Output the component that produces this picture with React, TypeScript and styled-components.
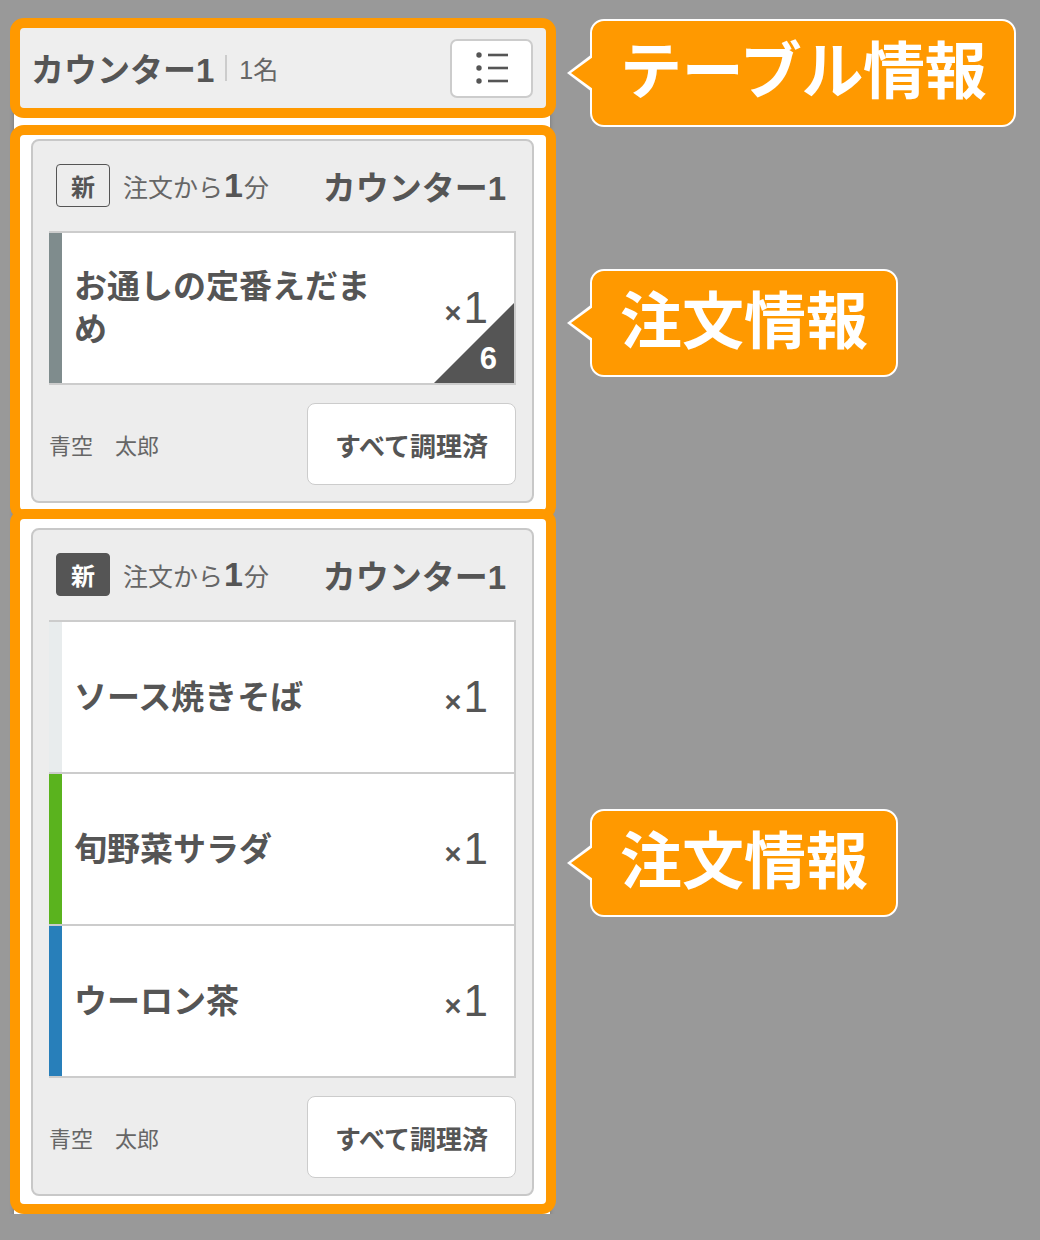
import styled, { createGlobalStyle } from 'styled-components'

const GlobalStyle = createGlobalStyle`
  body {
    margin: 0;
    background: #999;
    font-family: "Liberation Sans", "Noto Sans CJK JP", sans-serif;
    color: #555;
  }
`

const ORANGE = '#ff9900'

const Page = styled.div`
  display: grid;
  grid-template-columns: 546px 1fr;
  column-gap: 34px;
  align-items: center;
  padding: 18px 0 0 10px;
`

// white column sitting behind the highlighted sections
const Panel = styled.div`
  grid-column: 1;
  grid-row: 1 / span 3;
  align-self: stretch;
  margin: 40px 6px -6px 4px;
  background: #fff;
  box-shadow: 0 1px 4px rgba(0, 0, 0, 0.25);
`

const HeaderFrame = styled.header`
  grid-column: 1;
  grid-row: 1;
  box-sizing: border-box;
  height: 100px;
  display: flex;
  align-items: center;
  padding: 0 13px 0 11px;
  border: 10px solid ${ORANGE};
  border-radius: 14px;
  background: #eee;
`

const Title = styled.span`
  font-size: 33px;
  font-weight: 700;
  color: #555;
`

const Divider = styled.span`
  width: 2px;
  height: 26px;
  margin: 0 12px 0 11px;
  background: #ccc;
`

const Guests = styled.span`
  font-size: 25px;
  color: #666;
`

const MenuButton = styled.button`
  margin-left: auto;
  width: 83px;
  height: 59px;
  display: flex;
  align-items: center;
  justify-content: center;
  background: #fff;
  border: 2px solid #ccc;
  border-radius: 7px;
  padding: 0;
`

const Frame = styled.section<{ $row: number; $pad: string; $top: number }>`
  grid-column: 1;
  grid-row: ${(p) => p.$row};
  margin-top: ${(p) => p.$top}px;
  padding: ${(p) => p.$pad};
  border: 10px solid ${ORANGE};
  border-radius: 14px;
  background: #fff;
`

const Card = styled.div`
  padding: 23px 16px 16px;
  background: #ededed;
  border: 2px solid #c8c8c8;
  border-radius: 8px;
`

const CardHead = styled.div`
  display: flex;
  align-items: center;
  height: 43px;
  padding: 0 10px 0 7px;
`

const NewBadge = styled.span<{ $filled?: boolean }>`
  box-sizing: border-box;
  width: 54px;
  height: 43px;
  display: flex;
  align-items: center;
  justify-content: center;
  font-size: 24px;
  font-weight: 700;
  border-radius: 4px;
  border: 1.5px solid #555;
  background: ${(p) => (p.$filled ? '#555' : 'transparent')};
  color: ${(p) => (p.$filled ? '#fff' : '#555')};
`

const Elapsed = styled.span`
  margin-left: 13px;
  font-size: 25px;
  color: #666;

  b {
    font-size: 34px;
    font-weight: 700;
    color: #555;
    margin: 0 1px;
  }
`

const TableName = styled.span`
  margin-left: auto;
  font-size: 33px;
  font-weight: 700;
  color: #555;
`

const ItemList = styled.div`
  margin-top: 24px;
  border: 2px solid #ccc;
  border-left: 0;
  background: #fff;
`

const Item = styled.div`
  position: relative;
  display: flex;
  min-height: 150px;
  overflow: hidden;

  & + & {
    border-top: 2px solid #ccc;
  }
`

const Bar = styled.div<{ $color: string }>`
  width: 13px;
  flex-shrink: 0;
  background: ${(p) => p.$color};
`

const ItemBody = styled.div`
  flex: 1;
  display: flex;
  align-items: center;
  padding: 0 26px 0 12px;
`

const ItemName = styled.div`
  max-width: 310px;
  font-size: 33px;
  font-weight: 700;
  line-height: 43px;
  color: #555;
`

const Qty = styled.div`
  margin-left: auto;
  display: flex;
  align-items: baseline;
  line-height: 1;
  color: #555;

  small {
    font-size: 29px;
    font-weight: 700;
    margin-right: 2px;
  }
  span {
    font-size: 44px;
  }
`

const Corner = styled.div`
  position: absolute;
  right: 0;
  bottom: 0;
  width: 80px;
  height: 80px;
  display: flex;
  align-items: flex-end;
  justify-content: flex-end;
  padding: 0 17px 9px 0;
  box-sizing: border-box;
  background: #555;
  clip-path: polygon(100% 0, 100% 100%, 0 100%);
  color: #fff;
  font-size: 31px;
  font-weight: 700;
  line-height: 1;
`

const CardFoot = styled.div`
  margin-top: 18px;
  display: flex;
  align-items: center;
  justify-content: space-between;
`

const Staff = styled.span`
  font-size: 22px;
  color: #666;
`

const DoneButton = styled.button`
  width: 209px;
  height: 82px;
  background: #fff;
  border: 1.5px solid #ccc;
  border-radius: 8px;
  font-family: inherit;
  font-size: 26px;
  font-weight: 700;
  color: #555;
`

const Callout = styled.div<{ $row: number; $nudge: number; $tight?: boolean }>`
  grid-column: 2;
  grid-row: ${(p) => p.$row};
  justify-self: start;
  position: relative;
  margin: -20px 0;
  transform: translateY(${(p) => p.$nudge}px);
  padding: 16px 28px;
  background: ${ORANGE};
  border: 2px solid #fff;
  border-radius: 14px;
  color: #fff;
  font-size: 62px;
  font-weight: 700;
  line-height: 72px;
  letter-spacing: ${(p) => (p.$tight ? '-0.3px' : '0')};
  white-space: nowrap;

  &::before,
  &::after {
    content: '';
    position: absolute;
    top: 50%;
    border-style: solid;
  }
  &::before {
    left: -25px;
    margin-top: -19px;
    border-width: 19px 25px 19px 0;
    border-color: transparent #fff transparent transparent;
  }
  &::after {
    left: -21px;
    margin-top: -16px;
    border-width: 16px 22px 16px 0;
    border-color: transparent ${ORANGE} transparent transparent;
  }
`

type OrderItem = { name: string; qty: number; color: string; course?: number }

type Order = {
  filled: boolean
  items: OrderItem[]
}

const orders: Order[] = [
  {
    filled: false,
    items: [{ name: 'お通しの定番えだまめ', qty: 1, color: '#7f8c8d', course: 6 }],
  },
  {
    filled: true,
    items: [
      { name: 'ソース焼きそば', qty: 1, color: '#e8eced' },
      { name: '旬野菜サラダ', qty: 1, color: '#5ab31e' },
      { name: 'ウーロン茶', qty: 1, color: '#287fba' },
    ],
  },
]

const ListIcon = () => (
  <svg width="32" height="32" viewBox="0 0 32 32">
    {[3, 16, 29].map((y) => (
      <g key={y}>
        <circle cx="3" cy={y} r="2.7" fill="#555" />
        <line x1="12" y1={y} x2="32" y2={y} stroke="#555" strokeWidth="2.6" />
      </g>
    ))}
  </svg>
)

const OrderCard = ({ order }: { order: Order }) => (
  <Card>
    <CardHead>
      <NewBadge $filled={order.filled}>新</NewBadge>
      <Elapsed>
        注文から<b>1</b>分
      </Elapsed>
      <TableName>カウンター1</TableName>
    </CardHead>
    <ItemList>
      {order.items.map((it) => (
        <Item key={it.name}>
          <Bar $color={it.color} />
          <ItemBody>
            <ItemName>{it.name}</ItemName>
            <Qty>
              <small>×</small>
              <span>{it.qty}</span>
            </Qty>
          </ItemBody>
          {it.course != null && <Corner>{it.course}</Corner>}
        </Item>
      ))}
    </ItemList>
    <CardFoot>
      <Staff>青空　太郎</Staff>
      <DoneButton>すべて調理済</DoneButton>
    </CardFoot>
  </Card>
)

const App = () => {
  return (
    <>
      <GlobalStyle />
      <Page>
        <Panel />
        <HeaderFrame>
          <Title>カウンター1</Title>
          <Divider />
          <Guests>1名</Guests>
          <MenuButton>
            <ListIcon />
          </MenuButton>
        </HeaderFrame>
        <Callout $row={1} $nudge={5} $tight>
          テーブル情報
        </Callout>

        <Frame $row={2} $top={7} $pad="4px 12px 7px 11px">
          <OrderCard order={orders[0]} />
        </Frame>
        <Callout $row={2} $nudge={4}>注文情報</Callout>

        <Frame $row={3} $top={-11} $pad="9px 12px 8px 11px">
          <OrderCard order={orders[1]} />
        </Frame>
        <Callout $row={3} $nudge={-4}>注文情報</Callout>
      </Page>
    </>
  )
}

export default App
